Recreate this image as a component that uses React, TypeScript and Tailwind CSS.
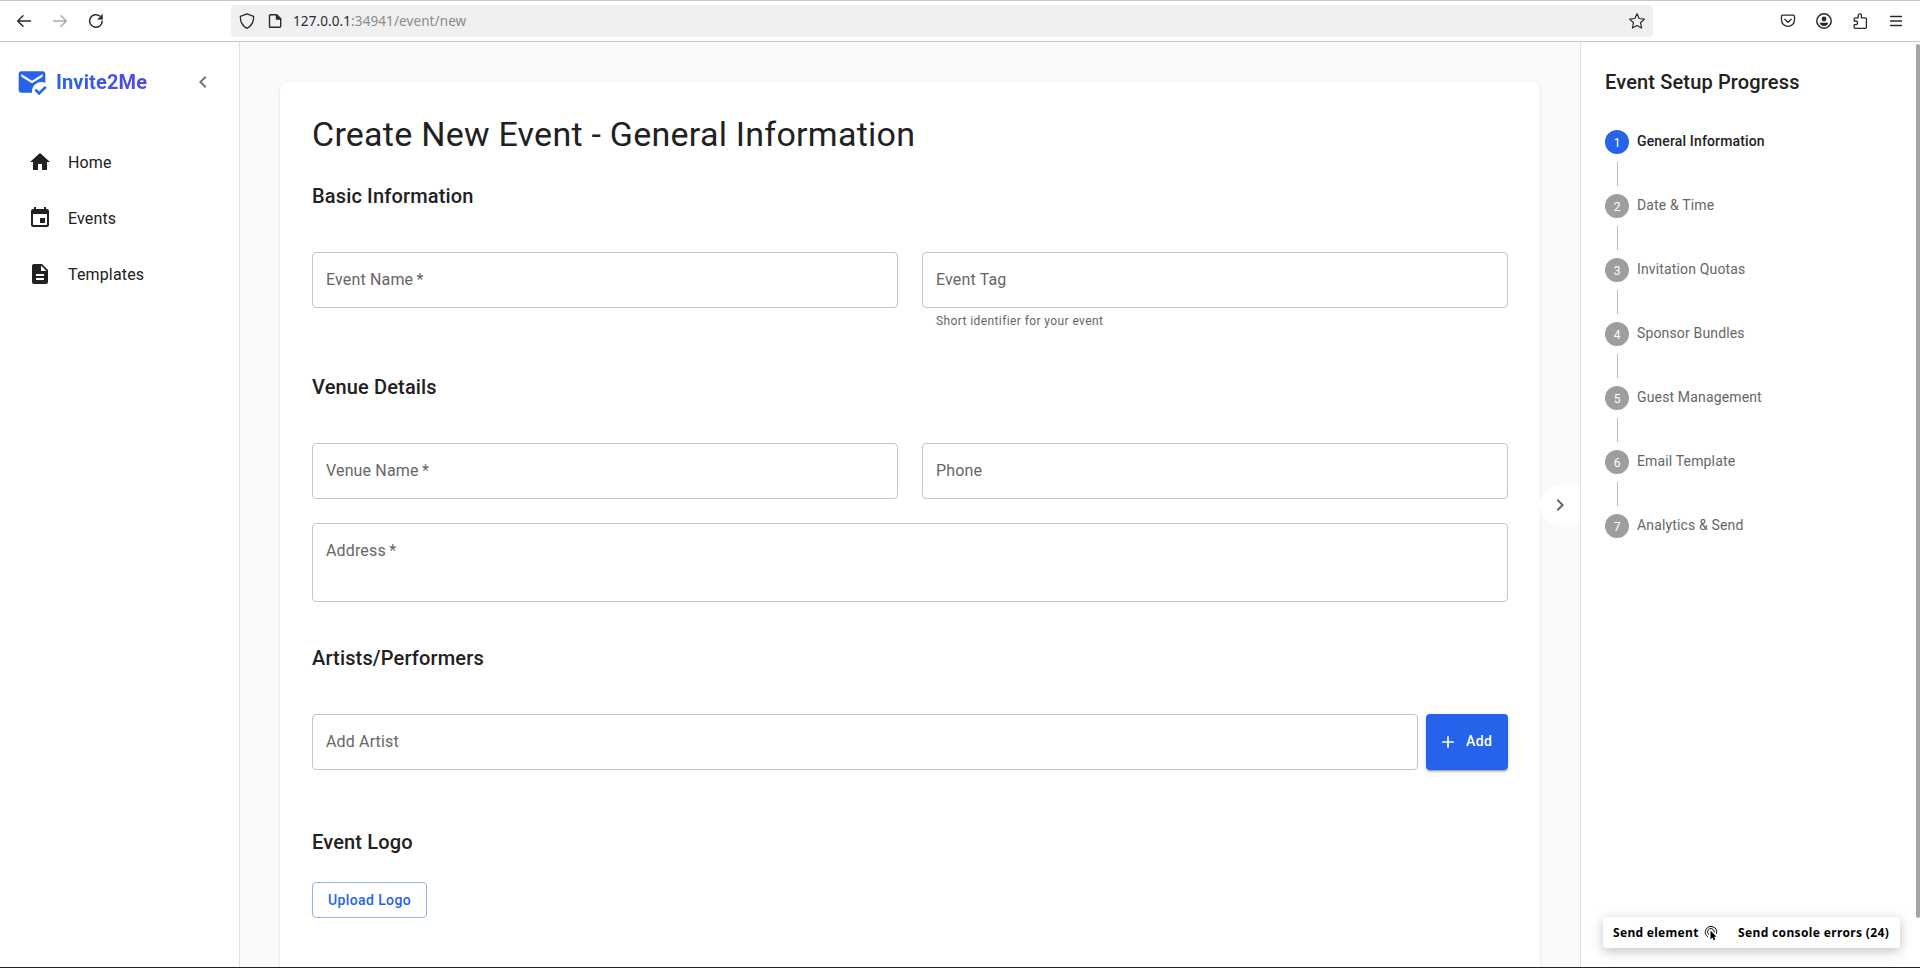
import React from "react";
import { MdMarkEmailRead, MdHome, MdEvent, MdDescription, MdChevronLeft, MdChevronRight, MdAdd } from "react-icons/md";

const stroke = { fill: "none", stroke: "currentColor", strokeLinecap: "round" as const, strokeLinejoin: "round" as const };

function BrowserBar() {
  return (
    <header className="flex h-[42px] shrink-0 items-center border-y border-[#c6c6c6] bg-white text-[#2b2a33]">
      <div className="flex w-[231px] shrink-0 items-center gap-5 pl-4">
        <svg className="size-4" viewBox="0 0 16 16" {...stroke} strokeWidth="1.5"><path d="M14.5 8H1.8M7 2.8 1.7 8 7 13.2" /></svg>
        <svg className="size-4 text-[#aaa9ad]" viewBox="0 0 16 16" {...stroke} strokeWidth="1.5"><path d="M1.5 8h12.7M9 2.8 14.3 8 9 13.2" /></svg>
        <svg className="size-4" viewBox="0 0 16 16" {...stroke} strokeWidth="1.5"><path d="M14.2 8.3A6.3 6.3 0 1 1 11.8 3" /><path d="M14.5 1.6v4.6H9.9z" fill="currentColor" strokeWidth=".6" /></svg>
      </div>
      <div className="flex h-8 w-[1422px] shrink-0 items-center rounded bg-[#f0f0f0] pr-2 pl-2">
        <svg className="size-4" viewBox="0 0 16 16" {...stroke} strokeWidth="1.3"><path d="M8 .8 14.6 3.300c.3 5-1.400 9.300-6.600 12C2.800 12.600 1.100 8.300 1.400 3.300z" /></svg>
        <svg className="ml-3 size-4" viewBox="0 0 16 16" {...stroke} strokeWidth="1.4"><path d="M3.500 1.700h6L13.700 6v7.300a1 1 0 0 1-1 1H3.500a1 1 0 0 1-1-1V2.700a1 1 0 0 1 1-1z" /><path d="M9.500 1.700V6h4.200z" fill="currentColor" /></svg>
        <span className="ml-2.5 font-['Noto_Sans',sans-serif] text-[13.5px] tracking-[0.1px] whitespace-nowrap text-[#8a8a8f]"><span className="text-[#2b2a33]">127.0.0.1</span>:34941/event/new</span>
        <svg className="ml-auto size-4" viewBox="0 0 16 16" {...stroke} strokeWidth="1.2"><path d="m8 .7 2.200 4.800 5.200.6-3.900 3.600 1.100 5.300L8 12.400l-4.600 2.600 1.100-5.300L.6 6.100l5.200-.6z" /></svg>
      </div>
      <div className="ml-auto flex items-center gap-5 pr-4">
        <svg className="size-4" viewBox="0 0 16 16" {...stroke} strokeWidth="1.3"><path d="M2.700 2.200h10.600a1.200 1.200 0 0 1 1.200 1.200v3.500a6.500 6.500 0 0 1-13 0V3.400a1.200 1.200 0 0 1 1.200-1.200z" /><path d="m4.800 6.300 3.200 3 3.200-3" /></svg>
        <svg className="size-4" viewBox="0 0 16 16"><circle cx="8" cy="8" r="7.200" {...stroke} strokeWidth="1.500" /><circle cx="8" cy="6" r="2.400" fill="currentColor" /><path d="M3.800 9.700h8.400c0 2-2 3.300-4.200 3.300S3.800 11.700 3.800 9.700z" fill="currentColor" /></svg>
        <svg className="size-4" viewBox="0 0 16 16" {...stroke} strokeWidth="1.300"><path d="M2.200 8V5.800a1 1 0 0 1 1-1h3V2.400a1.600 1.600 0 0 1 3.200 0v2.400h4a1 1 0 0 1 1 1v8.500a1 1 0 0 1-1 1H3.200a1 1 0 0 1-1-1v-2.600h1.500a1.800 1.800 0 0 0 0-3.700z" /></svg>
        <svg className="size-4" viewBox="0 0 16 16" {...stroke} strokeWidth="1.300"><path d="M2.500 3.500h11M2.500 8h11M2.500 12.500h11" /></svg>
      </div>
    </header>
  );
}

const nav = [
  { label: "Home", Icon: MdHome },
  { label: "Events", Icon: MdEvent },
  { label: "Templates", Icon: MdDescription },
];

function Sidebar() {
  return (
    <aside className="flex w-60 shrink-0 flex-col border-r border-[#e0e0e0] bg-white">
      <div className="flex items-center pt-6 pr-6 pl-4">
        <MdMarkEmailRead className="size-8 text-[#2563eb]" />
        <span className="ml-2 bg-linear-to-r from-[#2563eb] to-[#4f46e5] bg-clip-text text-xl leading-8 font-bold tracking-[0.15px] text-transparent">Invite2Me</span>
        <MdChevronLeft className="ml-auto size-6 text-[#757575]" />
      </div>
      <nav className="mt-[41px] flex flex-col gap-2">
        {nav.map(({ label, Icon }) => (
          <a key={label} className="flex h-12 items-center gap-4 pl-7 text-base tracking-[0.15px]">
            <Icon className="-mt-0.5 size-6" />
            <span>{label}</span>
          </a>
        ))}
      </nav>
    </aside>
  );
}

function Field({ label, required, className = "h-14" }: { label: string; required?: boolean; className?: string }) {
  return (
    <div className={`${className} min-w-0 flex-1 rounded border border-[#c4c4c4] px-[13px] py-[15px] text-base leading-[23px] tracking-[0.15px] text-[#666]`}>
      {label}{required && <span>&#8201;*</span>}
    </div>
  );
}

function Heading({ children }: { children: React.ReactNode }) {
  return <h2 className="text-xl leading-8 font-medium tracking-[0.15px]">{children}</h2>;
}

function EventForm() {
  return (
    <main className="flex min-w-0 flex-1 flex-col overflow-hidden bg-[#f8fafc] px-10 pt-10">
      <div className="h-[960px] shrink-0 rounded-lg bg-white p-8 shadow-[0_1px_3px_rgba(0,0,0,0.12)]">
        <h1 className="pb-0.5 text-[34px] leading-[40px] tracking-[0.25px]">Create New Event - General Information</h1>
        <section className="mt-6">
          <Heading>Basic Information</Heading>
          <div className="mt-10 grid grid-cols-2 gap-6">
            <div className="flex items-start"><Field label="Event Name" required /></div>
            <div>
              <div className="flex"><Field label="Event Tag" /></div>
              <p className="mt-[3px] ml-3.5 text-xs leading-5 tracking-[0.4px] text-[#666]">Short identifier for your event</p>
            </div>
          </div>
        </section>
        <section className="mt-10">
          <Heading>Venue Details</Heading>
          <div className="mt-10 grid grid-cols-2 gap-6">
            <Field label="Venue Name" required />
            <Field label="Phone" />
          </div>
          <div className="mt-6 flex"><Field label="Address" required className="h-[79px]" /></div>
        </section>
        <section className="mt-10">
          <Heading>Artists/Performers</Heading>
          <div className="mt-10 flex gap-2">
            <Field label="Add Artist" />
            <button className="flex h-14 w-[82px] items-center rounded bg-[#2563eb] pl-3 text-sm font-medium tracking-[0.4px] text-white shadow-[0_3px_1px_-2px_rgba(0,0,0,0.2),0_2px_2px_rgba(0,0,0,0.14),0_1px_5px_rgba(0,0,0,0.12)]">
              <MdAdd className="mr-2 size-5" /><span className="-mt-0.5">Add</span>
            </button>
          </div>
        </section>
        <section className="mt-14">
          <Heading>Event Logo</Heading>
          <button className="mt-6 h-9 w-[115px] rounded border border-[#92b1f5] text-sm font-medium tracking-[0.4px] text-[#2563eb]">Upload Logo</button>
        </section>
      </div>
    </main>
  );
}

const steps = ["General Information", "Date & Time", "Invitation Quotas", "Sponsor Bundles", "Guest Management", "Email Template", "Analytics & Send"];

function ClickIcon() {
  return (
    <svg className="mr-[9px] ml-[3px] size-4" viewBox="0 0 16 16" {...stroke} strokeWidth="1">
      <path d="M4.500 11.700A5.700 5.700 0 1 1 13.600 8.500" />
      <path d="M5.600 9.400A3.400 3.400 0 1 1 11.300 7.200" />
      <path d="M7.500 5.800v8.400l2-1.700 1.300 2.700 1.500-.7-1.300-2.700h2.600z" fill="currentColor" stroke="#fff" strokeWidth="1.400" className="[paint-order:stroke]" />
    </svg>
  );
}

function Progress() {
  return (
    <aside className="relative flex w-[340px] shrink-0 flex-col border-l border-[#e0e0e0] bg-white pt-6 pl-6">
      <h2 className="mb-8 text-xl leading-8 font-medium tracking-[0.15px]">Event Setup Progress</h2>
      <ol>
        {steps.map((s, i) => (
          <li key={s}>
            <div className="flex h-6 items-center gap-2">
              <span className={`flex size-6 items-center justify-center rounded-full pt-px text-xs text-white ${i === 0 ? "bg-[#2563eb]" : "bg-[#9e9e9e]"}`}>{i + 1}</span>
              <span className={`-mt-0.5 text-sm tracking-[0.15px] ${i === 0 ? "font-medium text-[#212121]" : "text-[#666]"}`}>{s}</span>
            </div>
            {i < steps.length - 1 && <div className="my-2 ml-3 h-6 border-l border-[#bdbdbd]" />}
          </li>
        ))}
      </ol>
      <button className="absolute top-[443px] -left-[41px] flex size-10 items-center justify-center rounded-l-full bg-white text-[#666]">
        <MdChevronRight className="size-6" />
      </button>
      <div className="absolute top-0.5 right-0 h-[874px] w-1 rounded-full bg-[#a6a6a6]" />
      <div className="absolute right-5 bottom-[19px] flex h-[31px] w-[297px] items-center rounded-[3px] bg-white pl-2.5 font-['Noto_Sans',sans-serif] text-xs font-bold tracking-[0.3px] whitespace-nowrap text-black shadow-[0_3px_12px_rgba(0,0,0,0.25)]">
        <span className="w-[87px]">Send element</span>
        <ClickIcon />
        <span className="ml-2.5 tracking-[0.35px]">Send console errors (24)</span>
      </div>
    </aside>
  );
}

export default function App() {
  return (
    <div className="flex h-[968px] w-[1920px] flex-col overflow-hidden border-b border-[#222] bg-white font-[Roboto,sans-serif] text-[#212121]">
      <BrowserBar />
      <div className="flex min-h-0 flex-1">
        <Sidebar />
        <EventForm />
        <Progress />
      </div>
    </div>
  );
}
